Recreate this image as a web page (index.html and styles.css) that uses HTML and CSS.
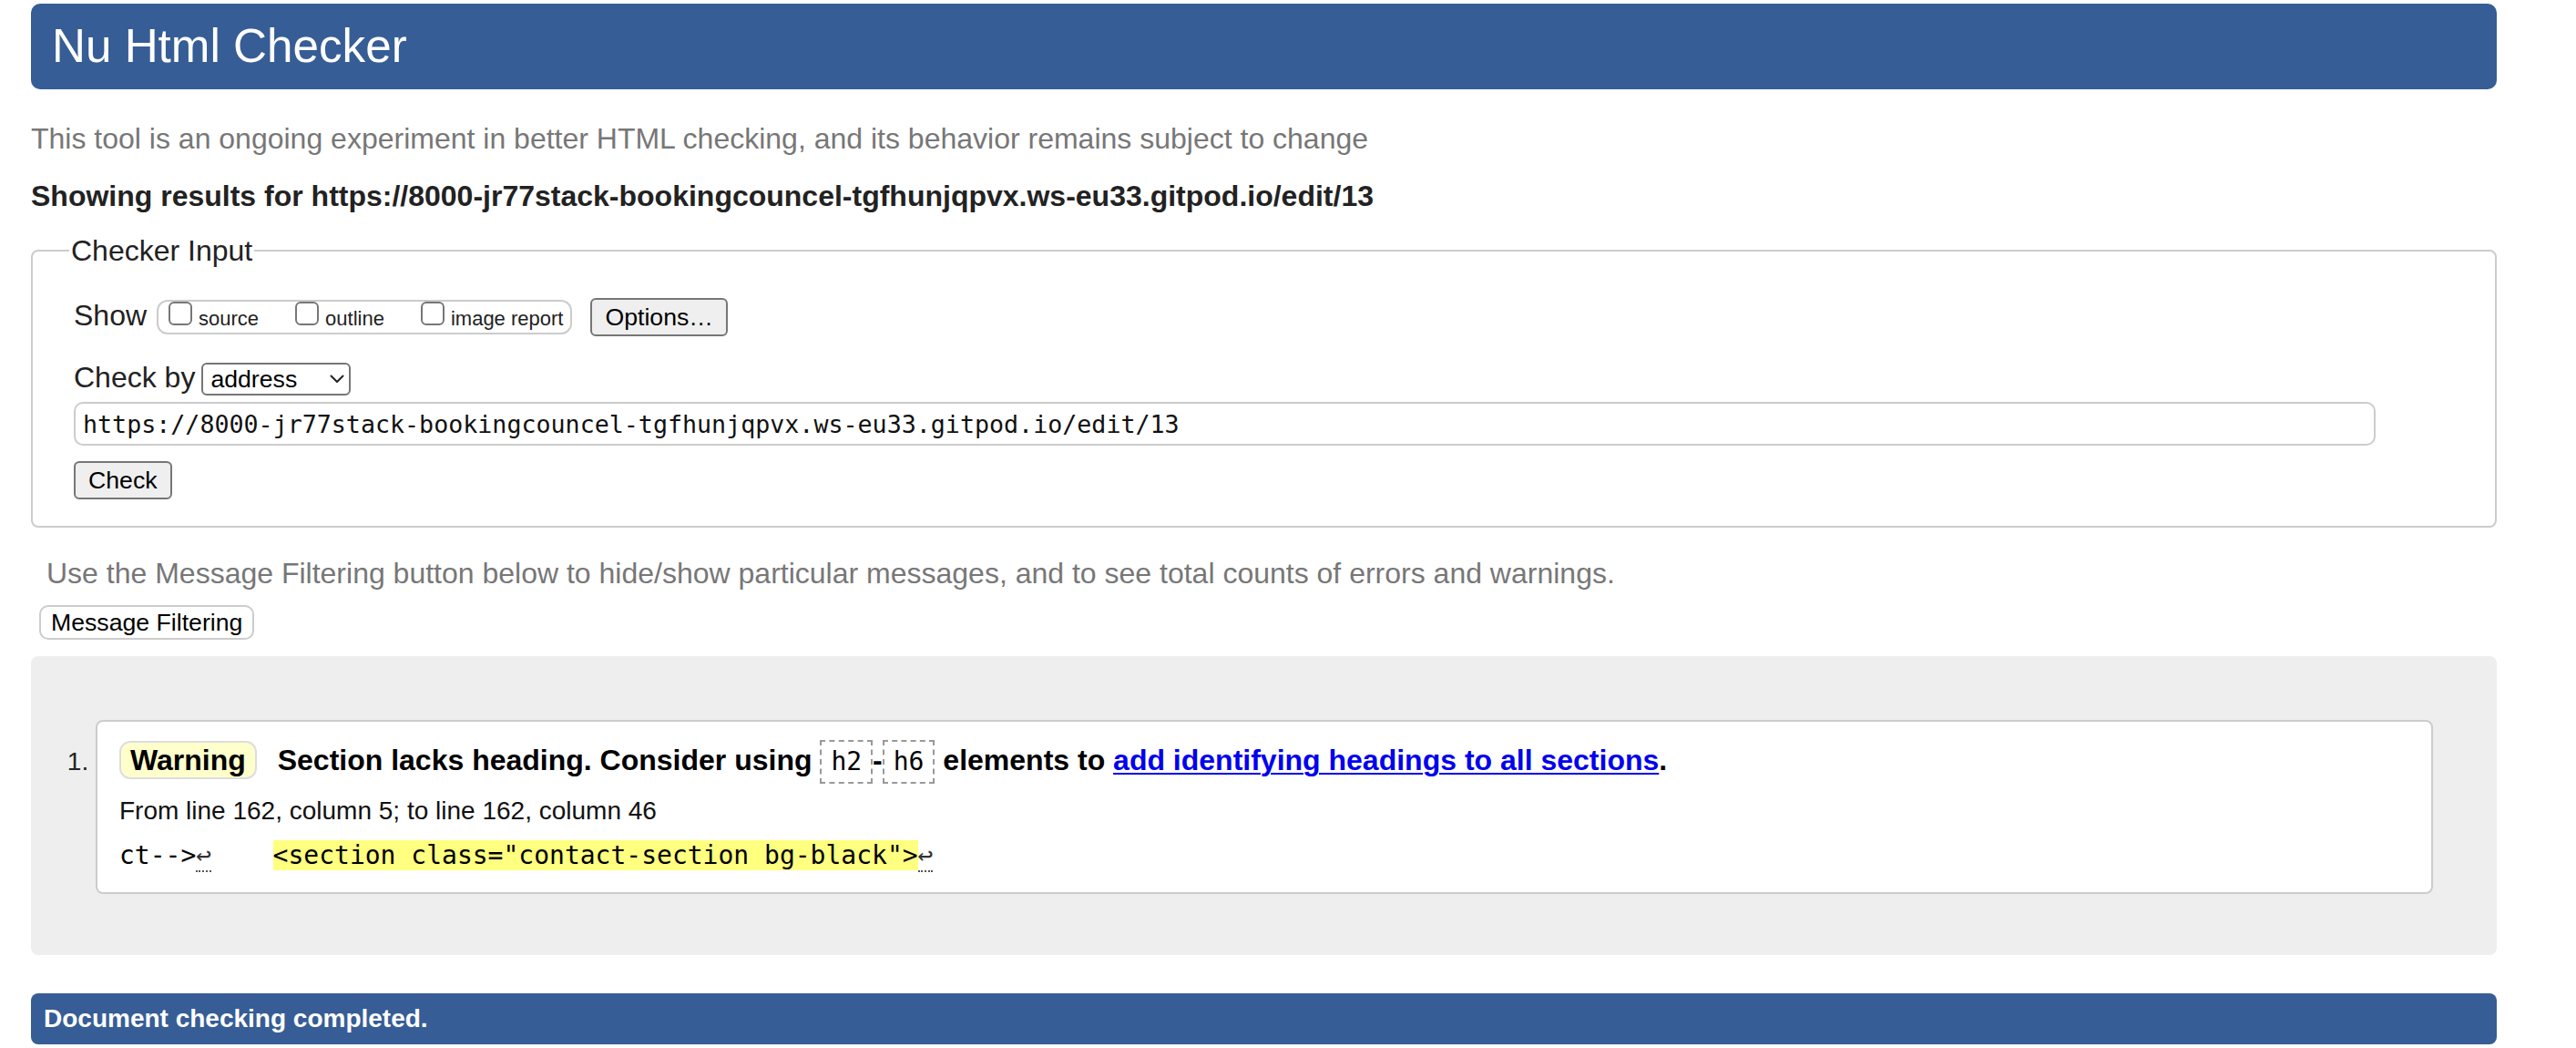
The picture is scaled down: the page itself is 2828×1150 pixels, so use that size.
FILE: index.html
```html
<!DOCTYPE html>
<html lang="en">
<head>
<meta charset="utf-8">
<title>Nu Html Checker</title>
<link rel="stylesheet" href="styles.css">
</head>
<body>
<h1 class="title">Nu Html Checker</h1>
<p class="intro">This tool is an ongoing experiment in better HTML checking, and its behavior remains subject to change</p>
<p class="showing">Showing results for https://8000-jr77stack-bookingcouncel-tgfhunjqpvx.ws-eu33.gitpod.io/edit/13</p>
<fieldset class="checker">
  <legend class="checker-legend">Checker Input</legend>
  <div class="row">
    <span class="label label-show">Show</span>
    <span class="show-options">
      <label class="opt"><input type="checkbox" class="cb"><span class="opt-text">source</span></label>
      <label class="opt"><input type="checkbox" class="cb"><span class="opt-text">outline</span></label>
      <label class="opt"><input type="checkbox" class="cb"><span class="opt-text">image report</span></label>
    </span>
    <button class="btn btn-options" type="button">Options…</button>
  </div>
  <div class="row row-by">
    <span class="label label-by">Check by</span>
    <span class="select-wrap">
      <select class="select"><option>address</option></select>
      <svg class="chev" width="16" height="10" viewBox="0 0 16 10" aria-hidden="true"><path d="M1.5 1.5 L8 8 L14.5 1.5" fill="none" stroke="#222" stroke-width="2" stroke-linecap="round" stroke-linejoin="round"/></svg>
    </span>
  </div>
  <input class="url" type="text" value="https://8000-jr77stack-bookingcouncel-tgfhunjqpvx.ws-eu33.gitpod.io/edit/13">
  <div class="row row-check"><button class="btn" type="button">Check</button></div>
</fieldset>
<p class="filter-note">Use the Message Filtering button below to hide/show particular messages, and to see total counts of errors and warnings.</p>
<button class="filter-btn" type="button">Message Filtering</button>
<div class="results">
  <ol class="messages">
    <li class="msg">
      <p class="msg-title"><strong class="badge">Warning</strong> Section lacks heading. Consider using <code class="el">h2</code>-<code class="el">h6</code> elements to <a class="msg-link" href="#">add identifying headings to all sections</a>.</p>
      <p class="loc">From line 162, column 5; to line 162, column 46</p>
      <p class="extract"><code>ct--&gt;<b class="lf">↩</b>    <mark class="hl">&lt;section class="contact-section bg-black"&gt;</mark><b class="lf">↩</b></code></p>
    </li>
  </ol>
</div>
<div class="done">Document checking completed.</div>
</body>
</html>
```

FILE: styles.css
```css
* { box-sizing: border-box; }

html { background: #fff; }

body {
  margin: 0 87px 0 34px;
  font-family: "Liberation Sans", Arial, Helvetica, sans-serif;
  font-size: 32px;
  line-height: 36px;
  color: #222;
  overflow: hidden;
}

.title {
  margin: 4px 0 0;
  height: 94px;
  padding: 0 23px;
  background: #365d95;
  color: #fff;
  font-size: 51.2px;
  font-weight: normal;
  line-height: 94px;
  border-radius: 10px;
}

.intro {
  margin: 36px 0 0;
  color: #777;
}

.showing {
  margin: 27px 0 0;
  font-weight: bold;
  color: #222;
}

.checker {
  margin: 24px 0 0;
  padding: 34px 131px 29px 45px;
  border: 2px solid #ccc;
  border-radius: 8px;
  min-width: 0;
}

.checker-legend {
  padding: 0 2px;
  margin-left: -5px;
  line-height: 36px;
}

.row {
  display: flex;
  align-items: baseline;
}

.label-show { margin-right: 11px; }
.label-by { margin-right: 7px; }

.show-options {
  display: inline-flex;
  align-items: center;
  height: 38px;
  padding: 0 8px 0 11px;
  border: 2px solid #ccc;
  border-radius: 12px;
  margin-right: 20px;
}

.opt {
  display: inline-flex;
  align-items: baseline;
  margin: 0 40px 4px 0;
  font-size: 22px;
  line-height: 22px;
}
.opt:last-child { margin-right: 0; }

.cb {
  appearance: none;
  -webkit-appearance: none;
  width: 26px;
  height: 26px;
  margin: 0 7px 0 0;
  border: 2px solid #777;
  border-radius: 6px;
  background: #fff;
}

.btn {
  height: 42px;
  padding: 0 14px;
  font-family: "Liberation Sans", Arial, sans-serif;
  font-size: 26.67px;
  color: #000;
  background: #efefef;
  border: 2px solid #767676;
  border-radius: 6px;
}

.row-by { margin-top: 27px; }

.select-wrap {
  position: relative;
  display: inline-block;
}

.select {
  appearance: none;
  -webkit-appearance: none;
  display: block;
  width: 164px;
  height: 36px;
  padding: 0 0 0 8px;
  font-family: "Liberation Sans", Arial, sans-serif;
  font-size: 26.67px;
  color: #000;
  background: #fff;
  border: 2px solid #767676;
  border-radius: 6px;
}

.chev {
  position: absolute;
  right: 7px;
  top: 13px;
  pointer-events: none;
}

.url {
  display: block;
  width: 100%;
  height: 48px;
  margin-top: 7px;
  padding: 0 8px;
  font-family: "DejaVu Sans Mono", Menlo, monospace;
  font-size: 26.67px;
  color: #111;
  border: 2px solid #ccc;
  border-radius: 10px;
  background: #fff;
}

.row-check { margin-top: 17px; }

.filter-note {
  margin: 32px 0 0;
  padding-left: 17px;
  color: #777;
}

.filter-btn {
  display: block;
  height: 38px;
  margin: 17px 0 0 9px;
  padding: 0 11px;
  font-family: "Liberation Sans", Arial, sans-serif;
  font-size: 26.67px;
  color: #000;
  background: #fff;
  border: 2px solid #ccc;
  border-radius: 10px;
}

.results {
  margin-top: 18px;
  padding: 70px 70px 67px 71px;
  background: #eee;
  border-radius: 8px;
}

.messages {
  margin: 0;
  padding: 0;
  list-style: decimal;
}

.msg {
  padding: 18px 24px 22px;
  background: #fff;
  border: 2px solid #ccc;
  border-radius: 8px;
  font-size: 28px;
  line-height: 32px;
  color: #222;
}
.msg::marker {
  font-size: 28px;
  color: #222;
}

.msg-title {
  margin: 0;
  font-size: 32px;
  font-weight: bold;
  line-height: 48px;
  color: #000;
}

.badge {
  display: inline-block;
  padding: 1px 10px;
  margin-right: 14px;
  line-height: 36px;
  background: #ffc;
  border: 2px solid #ddd;
  border-radius: 12px;
}

.el {
  display: inline-block;
  padding: 2px 10px;
  font-family: "DejaVu Sans Mono", Menlo, monospace;
  font-size: 28px;
  font-weight: normal;
  line-height: 40px;
  border: 2px dashed #999;
}

.msg-link {
  color: #00e;
  text-decoration: underline;
  text-decoration-thickness: 2px;
  text-underline-offset: 3px;
}

.loc {
  margin: 14px 0 0;
  font-size: 28px;
  line-height: 32px;
  color: #111;
}

.extract {
  margin: 15px 0 0;
  font-family: "DejaVu Sans Mono", Menlo, monospace;
  font-size: 28px;
  line-height: 36px;
  white-space: pre;
  color: #000;
}
.extract code { font-family: inherit; }

.hl {
  background: #ffff80;
  color: #000;
}

.lf {
  font-weight: normal;
  color: #333;
  border-bottom: 2px dotted #555;
}

.done {
  margin-top: 42px;
  height: 56px;
  padding-left: 14px;
  background: #365d95;
  color: #fff;
  font-weight: bold;
  font-size: 28px;
  line-height: 56px;
  border-radius: 8px;
}
```
